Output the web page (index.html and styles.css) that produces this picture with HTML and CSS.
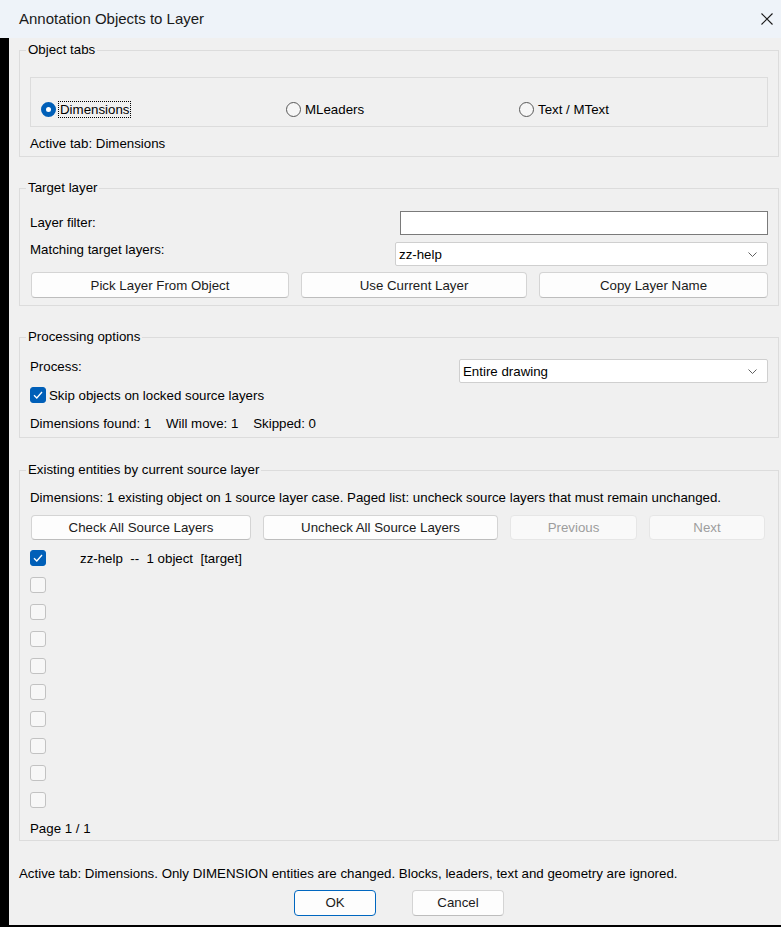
FILE: index.html
```html
<!DOCTYPE html>
<html>
	<head>
		<title>Annotation Objects to Layer</title>
		<link rel="stylesheet" href="styles.css">
	</head>
	<body>
		<div class="window">
			<div class="titlebar">
				<span class="title">Annotation Objects to Layer</span>
				<svg class="close" width="12" height="12" viewBox="0 0 12 12">
					<path d="M0.5 0.5 L11.5 11.5 M11.5 0.5 L0.5 11.5" stroke="#1a1a1a" stroke-width="1.1" fill="none"/>
				</svg>
			</div>

			<div class="frame">
				<div class="client">

					<fieldset class="group group-tabs">
						<legend>Object tabs</legend>
						<div class="tabbox">
							<label class="radio-item">
								<span class="radio radio-on"></span>
								<span class="focus">Dimensions</span>
							</label>
							<label class="radio-item">
								<span class="radio"></span>
								<span>MLeaders</span>
							</label>
							<label class="radio-item">
								<span class="radio"></span>
								<span>Text / MText</span>
							</label>
						</div>
						<div class="line tabs-status">Active tab: Dimensions</div>
					</fieldset>

					<fieldset class="group group-target">
						<legend>Target layer</legend>
						<div class="row row-center">
							<span class="row-label">Layer filter:</span>
							<div class="textbox"></div>
						</div>
						<div class="row row-select">
							<span class="row-label">Matching target layers:</span>
							<div class="combo combo-layers">
								<span>zz-help</span>
								<svg class="chevron" width="9" height="5" viewBox="0 0 9 5"><path d="M0.5 0.5 L4.5 4.5 L8.5 0.5" stroke="#606060" fill="none"/></svg>
							</div>
						</div>
						<div class="btnrow btnrow-target">
							<button class="btn w-pick">Pick Layer From Object</button>
							<button class="btn w-current">Use Current Layer</button>
							<button class="btn w-copy">Copy Layer Name</button>
						</div>
					</fieldset>

					<fieldset class="group group-proc">
						<legend>Processing options</legend>
						<div class="row">
							<span class="row-label">Process:</span>
							<div class="combo combo-process">
								<span>Entire drawing</span>
								<svg class="chevron" width="9" height="5" viewBox="0 0 9 5"><path d="M0.5 0.5 L4.5 4.5 L8.5 0.5" stroke="#606060" fill="none"/></svg>
							</div>
						</div>
						<label class="check-item skip-row">
							<span class="check check-on">
								<svg width="10" height="8" viewBox="0 0 10 8"><path d="M1 4.2 L3.8 7 L9 1" stroke="#fff" stroke-width="1.3" fill="none"/></svg>
							</span>
							<span>Skip objects on locked source layers</span>
						</label>
						<div class="line counts">Dimensions found: 1&nbsp;&nbsp;&nbsp;&nbsp;Will move: 1&nbsp;&nbsp;&nbsp;&nbsp;Skipped: 0</div>
					</fieldset>

					<fieldset class="group group-list">
						<legend>Existing entities by current source layer</legend>
						<div class="line list-note">Dimensions: 1 existing object on 1 source layer case. Paged list: uncheck source layers that must remain unchanged.</div>
						<div class="btnrow btnrow-list">
							<button class="btn w-checkall">Check All Source Layers</button>
							<button class="btn w-uncheckall">Uncheck All Source Layers</button>
							<button class="btn btn-off w-prev">Previous</button>
							<button class="btn btn-off w-next">Next</button>
						</div>
						<div class="layer-list">
							<div class="layer-row">
								<span class="check check-on">
									<svg width="10" height="8" viewBox="0 0 10 8"><path d="M1 4.2 L3.8 7 L9 1" stroke="#fff" stroke-width="1.3" fill="none"/></svg>
								</span>
								<span class="layer-name">zz-help&nbsp;&nbsp;--&nbsp;&nbsp;1 object&nbsp;&nbsp;[target]</span>
							</div>
							<div class="layer-row"><span class="check"></span></div>
							<div class="layer-row"><span class="check"></span></div>
							<div class="layer-row"><span class="check"></span></div>
							<div class="layer-row"><span class="check"></span></div>
							<div class="layer-row"><span class="check"></span></div>
							<div class="layer-row"><span class="check"></span></div>
							<div class="layer-row"><span class="check"></span></div>
							<div class="layer-row"><span class="check"></span></div>
							<div class="layer-row"><span class="check"></span></div>
						</div>
						<div class="line page">Page 1 / 1</div>
					</fieldset>

					<div class="line footer-note">Active tab: Dimensions. Only DIMENSION entities are changed. Blocks, leaders, text and geometry are ignored.</div>
					<div class="dialog-buttons">
						<button class="btn btn-default w-ok">OK</button>
						<button class="btn w-cancel">Cancel</button>
					</div>

				</div>
			</div>
		</div>
	</body>
</html>
```

FILE: styles.css
```css
body {
	margin: 0;
	background: #f0f0f0;
	color: #000;
	font-family: "Liberation Sans", Arial, sans-serif;
	font-size: 13.3px;
}

.window {
	width: 781px;
	height: 927px;
	display: flex;
	flex-direction: column;
	overflow: hidden;
}

.titlebar {
	height: 38px;
	flex: none;
	background: #eef3f9;
	display: flex;
	align-items: center;
	padding: 0 8px 0 19px;
}

.title {
	flex: 1;
	font-size: 15px;
	color: #1a1a1a;
	padding-bottom: 1px;
}

.close {
	display: block;
}

.frame {
	flex: 1;
	border-left: 9px solid #000;
	border-bottom: 2px solid #000;
	display: flex;
	flex-direction: column;
}

.client {
	flex: 1;
	background: #f0f0f0;
	padding: 0 2px 0 10px;
}

.line {
	height: 16px;
	line-height: 16px;
	white-space: nowrap;
}

/* group boxes */

.group {
	margin: 0;
	border: 1px solid #dcdcdc;
	padding: 0 10px;
	min-width: 0;
}

.group legend {
	height: 16px;
	line-height: 16px;
	padding: 0 2px;
	margin-left: -4px;
}

.group-tabs {
	margin-top: 4px;
	padding-top: 19px;
	padding-bottom: 4px;
}

.group-target {
	margin-top: 23px;
	padding-top: 15px;
	padding-bottom: 7px;
}

.group-proc {
	margin-top: 23px;
	padding-top: 14px;
	padding-bottom: 5px;
}

.group-list {
	margin-top: 24px;
	padding-top: 12px;
	padding-bottom: 3px;
}

/* object tabs */

.tabbox {
	border: 1px solid #dcdcdc;
	padding: 23px 0 0 10px;
	box-sizing: border-box;
	height: 50px;
	display: grid;
	grid-template-columns: 245px 233px auto;
	align-items: start;
}

.radio-item {
	display: flex;
	align-items: center;
	height: 16px;
}

.radio {
	width: 13px;
	height: 13px;
	border: 1px solid #585858;
	border-radius: 50%;
	background: #f6f6f6;
	margin-right: 4px;
	flex: none;
}

.radio-on {
	width: 5px;
	height: 5px;
	border: 5px solid #005fb8;
	background: #fff;
	margin-right: 3px;
}

.focus {
	outline: 1px dotted #000;
	outline-offset: 0;
	padding: 0 1px;
	line-height: 15px;
}

.tabs-status {
	margin-top: 9px;
}

/* rows with label + control */

.row {
	display: flex;
	align-items: flex-start;
}

.row-center {
	align-items: center;
}

.row-select {
	margin-top: 7px;
}

.row-label {
	flex: 1;
	line-height: 16px;
}

.textbox {
	width: 366px;
	height: 22px;
	border: 1px solid #7a7a7a;
	background: #fff;
}

.combo {
	height: 22px;
	border: 1px solid #cfcfcf;
	border-radius: 2px;
	background: #fff;
	display: flex;
	align-items: center;
	padding: 0 10px 0 3px;
}

.combo span {
	flex: 1;
}

.combo-layers {
	width: 358px;
}

.combo-process {
	width: 294px;
}

.chevron {
	display: block;
}

/* buttons */

.btnrow {
	display: flex;
	gap: 12px;
	padding-left: 1px;
}

.btnrow-target {
	margin-top: 6px;
}

.btnrow-list {
	margin-top: 9px;
}

.btn {
	height: 26px;
	border: 1px solid #d4d4d4;
	border-bottom-color: #bdbdbd;
	border-radius: 4px;
	background: #fdfdfd;
	font-family: inherit;
	font-size: 13.3px;
	color: #1b1b1b;
	padding: 0;
}

.btnrow-list .btn {
	height: 25px;
}

.btn-off {
	background: #f9f9f9;
	border-color: #e6e6e6;
	color: #9d9d9d;
}

.btn-default {
	border: 1px solid #0067c0;
}

.w-pick { width: 258px; }
.w-current { width: 226px; }
.w-copy { width: 229px; }
.w-checkall { width: 220px; }
.w-uncheckall { width: 235px; }
.w-prev { width: 127px; }
.w-next { width: 116px; }
.w-ok { width: 82px; }
.w-cancel { width: 92px; }

/* checkboxes */

.check-item {
	display: flex;
	align-items: center;
	height: 16px;
}

.skip-row {
	margin-top: 4px;
}

.check {
	width: 14px;
	height: 14px;
	border: 1px solid #c2c2c2;
	border-radius: 3px;
	background: #f7f7f7;
	display: flex;
	align-items: center;
	justify-content: center;
	flex: none;
}

.check-on {
	background: #005fb8;
	border-color: #005fb8;
}

.check-item .check {
	margin-right: 3px;
}

.counts {
	margin-top: 13px;
}

/* source layer list */

.layer-list {
	margin-top: 5px;
}

.layer-row {
	height: 26.8px;
	display: flex;
	align-items: center;
}

.layer-name {
	margin-left: 34px;
}

.page {
	margin-top: 8px;
}

/* footer */

.footer-note {
	margin-top: 25px;
}

.dialog-buttons {
	display: flex;
	justify-content: center;
	gap: 36px;
	margin-top: 8px;
}
```
